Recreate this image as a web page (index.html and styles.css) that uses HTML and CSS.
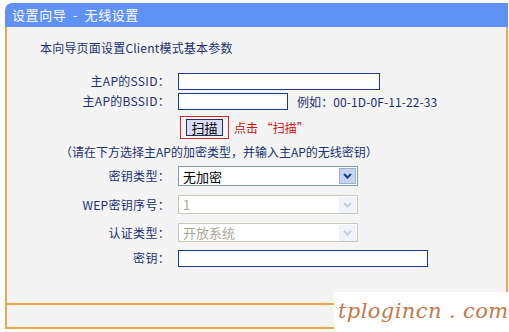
FILE: index.html
```html
<!DOCTYPE html>
<html lang="zh-CN">
<head>
    <meta charset="UTF-8">
    <title>设置向导 - 无线设置</title>
    <link rel="stylesheet" href="styles.css">
</head>
<body>
    <div class="panel">
        <div class="head">设置向导 - 无线设置</div>
        <div class="body">
            <p class="intro">本向导页面设置Client模式基本参数</p>
            <div class="form">
                <label>主AP的SSID：</label>
                <div class="cell"><span class="input ssid"></span></div>

                <label>主AP的BSSID：</label>
                <div class="cell"><span class="input bssid"></span><span class="hint">例如：00-1D-0F-11-22-33</span></div>

                <span></span>
                <div class="cell">
                    <span class="scan-box"><span class="scan-btn">扫描</span></span>
                    <span class="tip">点击 “扫描”</span>
                </div>

                <p class="note">（请在下方选择主AP的加密类型，并输入主AP的无线密钥）</p>

                <label>密钥类型：</label>
                <div class="cell">
                    <span class="select">无加密<span class="arrow"><svg width="9" height="6" viewBox="0 0 9 6"><path d="M1 1l3.5 3.5L8 1" fill="none" stroke="#1f3e86" stroke-width="2"/></svg></span></span>
                </div>

                <label>WEP密钥序号：</label>
                <div class="cell">
                    <span class="select off">1<span class="arrow"><svg width="9" height="6" viewBox="0 0 9 6"><path d="M1 1l3.5 3.5L8 1" fill="none" stroke="#c4cfe0" stroke-width="2"/></svg></span></span>
                </div>

                <label>认证类型：</label>
                <div class="cell">
                    <span class="select off">开放系统<span class="arrow"><svg width="9" height="6" viewBox="0 0 9 6"><path d="M1 1l3.5 3.5L8 1" fill="none" stroke="#c4cfe0" stroke-width="2"/></svg></span></span>
                </div>

                <label>密钥：</label>
                <div class="cell"><span class="input key"></span></div>
            </div>
        </div>
        <div class="foot"></div>
    </div>
    <div class="mark">tplogincn . com</div>
</body>
</html>
```

FILE: styles.css
```css
body{
    margin:0;
    background:#fff;
    font-family:"Noto Sans CJK SC", sans-serif;
    font-size:12px;
    color:#1b3170;
    width:509px;
    height:332px;
    position:relative;
    overflow:hidden;
}
.panel{
    margin:3px 1px 0 5px;
}
.head{
    height:24px;
    line-height:23px;
    background:#5f92f4;
    color:#fff;
    font-size:13px;
    letter-spacing:0.6px;
    word-spacing:3px;
    padding-left:7px;
    border-top-left-radius:7px;
}
.body{
    height:276px;
    background:#f4f4f4;
    border-left:2px solid #f0a64c;
    border-right:2px solid #f0a64c;
    box-sizing:border-box;
    overflow:hidden;
}
.intro{
    margin:13px 0 0 33px;
    line-height:16px;
    letter-spacing:0.2px;
}
.form{
    display:grid;
    grid-template-columns:163px 1fr;
    grid-template-rows:20px 20px 32px 18px 30px 27px 29px 22px;
    column-gap:8px;
    margin-top:15px;
}
.form label{
    text-align:right;
    align-self:center;
    line-height:14px;
    letter-spacing:0.3px;
}
.cell{
    display:flex;
    align-items:center;
    gap:9px;
}
.input{
    display:block;
    height:17px;
    box-sizing:border-box;
    background:#fff;
    border:1px solid #1f3a8a;
}
.ssid{ width:202px; }
.bssid{ width:110px; }
.key{ width:250px; }
.hint{
    letter-spacing:0.1px;
}
.scan-box{
    display:flex;
    align-items:center;
    justify-content:center;
    width:49px;
    height:23px;
    margin-left:2px;
    border:1px solid #d8282c;
    box-sizing:border-box;
}
.scan-btn{
    width:37px;
    height:17px;
    box-sizing:border-box;
    border:1px solid #2a2f48;
    background:#dcdcf6;
    color:#000;
    font-size:13px;
    line-height:15px;
    text-align:center;
}
.tip{
    color:#cc1111;
    margin-left:-4px;
}
.note{
    grid-column:1 / 3;
    margin:0 0 0 53px;
    align-self:center;
    line-height:16px;
}
.select{
    display:flex;
    align-items:center;
    position:relative;
    width:180px;
    height:20px;
    box-sizing:border-box;
    background:#fff;
    border:1px solid #7f9db9;
    padding-left:4px;
    color:#000;
    font-size:13px;
}
.arrow{
    margin-left:auto;
    width:17px;
    height:16px;
    margin-right:1px;
    display:flex;
    align-items:center;
    justify-content:center;
    background:#c6d4f2;
    border:1px solid #9aaed6;
    box-sizing:border-box;
}
.select.off{
    border-color:#c9c7ba;
    color:#aca899;
    height:19px;
}
.select.off .arrow{
    background:#f0f3fa;
    border-color:#eef1f8;
}
.foot{
    height:26px;
    background:#f4f4f4;
    border:2px solid #f0a64c;
    box-sizing:border-box;
}
.mark{
    position:absolute;
    right:0;
    bottom:0;
    width:175px;
    height:40px;
    background:#fff;
    color:#c7784a;
    font-family:"DejaVu Serif", serif;
    font-style:italic;
    font-size:21px;
    letter-spacing:0.4px;
    line-height:38px;
    padding-left:4px;
    box-sizing:border-box;
    white-space:nowrap;
}
```
